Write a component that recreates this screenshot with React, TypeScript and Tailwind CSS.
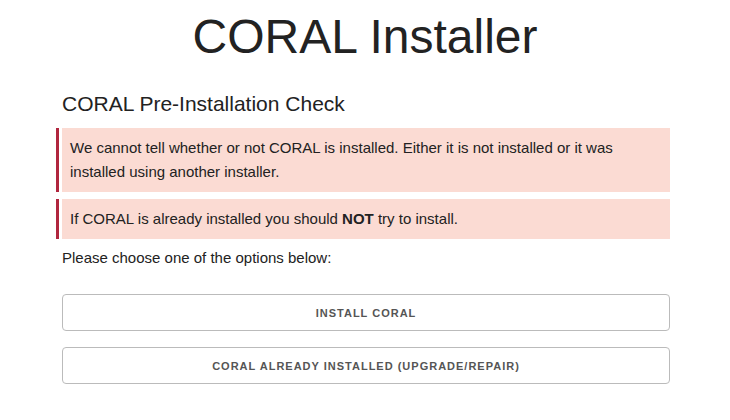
import React from "react";

function Alert({ children }: { children: React.ReactNode }) {
  return (
    <div className="-ml-[6px] flex gap-[3px]">
      <div className="w-[3px] shrink-0 bg-[#b0263e]" />
      <div className="flex-1 bg-[#fbdbd3] px-2 py-2 text-[15px] leading-[24px] text-[#222]">
        {children}
      </div>
    </div>
  );
}

export default function App() {
  return (
    <div className="min-h-[420px] bg-white font-['Liberation_Sans',Arial,sans-serif] text-[#222]">
      <h1 className="pt-[8px] text-center text-[48px] font-normal leading-[1.2] text-[#222]">
        CORAL Installer
      </h1>
      <div className="ml-[62px] w-[608px]">
        <h2 className="mt-[26px] text-[21px] font-normal leading-[24px] text-[#222]">
          CORAL Pre-Installation Check
        </h2>
        <div className="mt-[12px] flex flex-col gap-[7px]">
          <Alert>
            We cannot tell whether or not CORAL is installed. Either it is not installed or it was
            installed using another installer.
          </Alert>
          <Alert>
            If CORAL is already installed you should <b>NOT</b> try to install.
          </Alert>
        </div>
        <p className="mt-[7px] text-[15px] leading-[24px] text-[#222]">
          Please choose one of the options below:
        </p>
        <div className="mt-[24px] flex flex-col gap-[16px]">
          <button className="h-[37px] w-full rounded-[4px] border border-[#bbbbbb] bg-white pt-[3px] text-[11px] font-bold uppercase tracking-[1px] text-[#555]">
            Install CORAL
          </button>
          <button className="h-[37px] w-full rounded-[4px] border border-[#bbbbbb] bg-white pt-[3px] text-[11px] font-bold uppercase tracking-[1px] text-[#555]">
            CORAL already installed (upgrade/repair)
          </button>
        </div>
      </div>
    </div>
  );
}
